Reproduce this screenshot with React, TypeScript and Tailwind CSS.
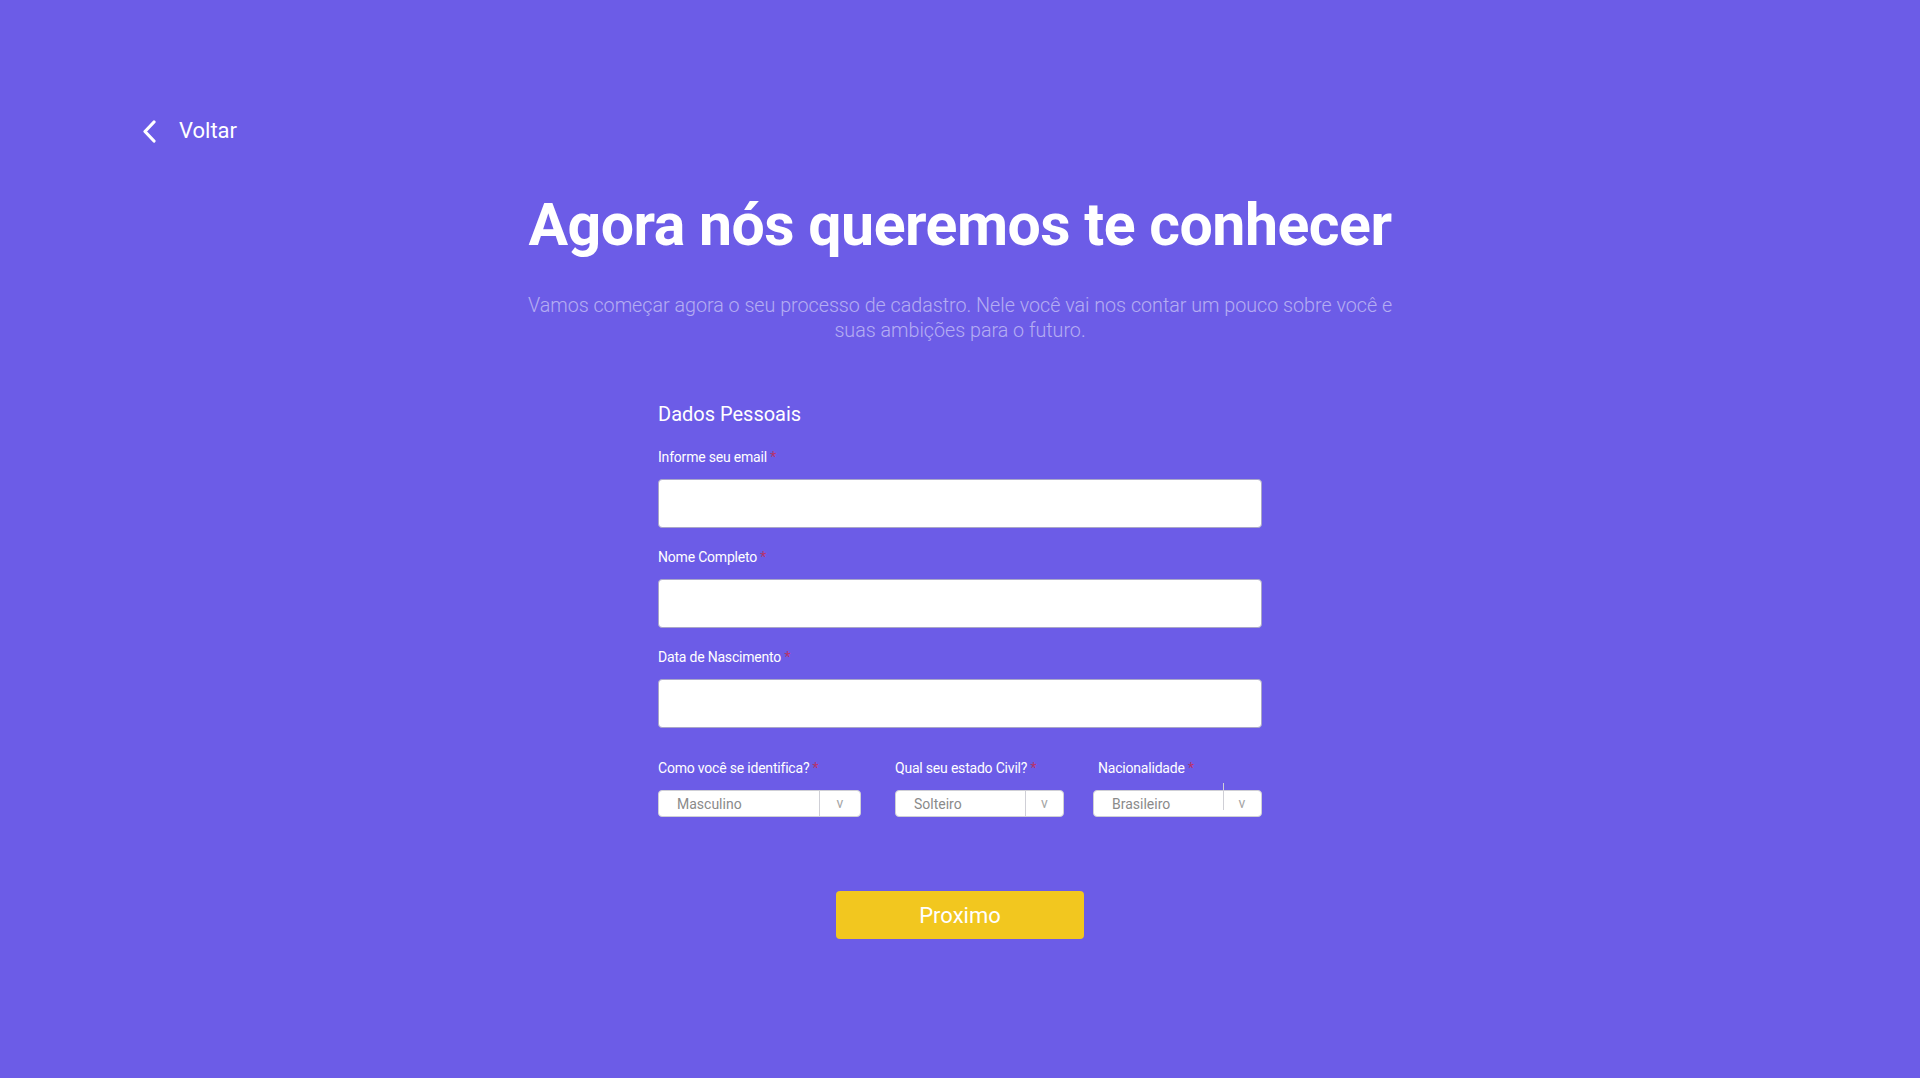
import React from "react";

const Label = ({ text, className = "" }: { text: string; className?: string }) => (
  <label className={`block text-[14px] leading-5 text-white tracking-[-0.2px] ${className}`}>
    {text} <span className="text-[#b8336a]">*</span>
  </label>
);

const Field = ({ label }: { label: string }) => (
  <div className="flex flex-col">
    <Label text={label} className="mb-3" />
    <input
      type="text"
      className="h-[49px] w-full rounded-[4px] border border-[#a9a6c8] bg-white px-3 outline-none"
    />
  </div>
);

const Select = ({
  label,
  value,
  width,
  arrowW,
  glitch = false,
  labelIndent = false,
}: {
  label: string;
  value: string;
  width: string;
  arrowW: string;
  glitch?: boolean;
  labelIndent?: boolean;
}) => (
  <div className={`flex flex-col ${width}`}>
    <Label text={label} className={`mb-3 ${labelIndent ? "pl-[5px]" : ""}`} />
    <div className="relative flex h-[27px] items-center rounded-[4px] border border-[#cfcfd6] bg-white">
      <span className="flex-1 pl-[18px] text-[14px] leading-5 text-[#8a8a8a]">{value}</span>
      <span
        className={`flex h-full ${arrowW} items-center justify-center text-[14px] text-[#a6a6a6] ${
          glitch ? "" : "border-l border-[#cfcfd6]"
        }`}
      >
        v
      </span>
      {glitch && (
        <span className="absolute right-[37px] top-[-8px] h-[27px] w-px bg-[#cfcfd6]" />
      )}
    </div>
  </div>
);

export default function App() {
  return (
    <div className="h-[1078px] w-full bg-[#6c5ce7] font-['Roboto',sans-serif] text-white">
      <div className="pt-[116px] pl-[142px]">
        <button className="flex items-center gap-[22px] text-[22px] leading-[30px] text-white">
          <svg width="15" height="23" viewBox="0 0 15 23" fill="none">
            <path d="M12 2 L3 11.5 L12 21" stroke="white" strokeWidth="3.2" strokeLinecap="round" strokeLinejoin="round" />
          </svg>
          <span>Voltar</span>
        </button>
      </div>

      <div className="mt-[49px] flex flex-col items-center">
        <h1 className="text-[59px] font-bold leading-[60px] tracking-[-0.5px] text-white">
          Agora nós queremos te conhecer
        </h1>
        <p className="mt-[38px] w-[880px] text-center text-[19.7px] font-light leading-[25px] text-white/50">
          Vamos começar agora o seu processo de cadastro. Nele você vai nos contar um pouco sobre você e
          suas ambições para o futuro.
        </p>

        <form className="mt-[57px] w-[604px]" onSubmit={(e) => e.preventDefault()}>
          <h2 className="mb-[19px] text-[20px] leading-7 text-white">Dados Pessoais</h2>
          <div className="flex flex-col gap-[19px]">
            <Field label="Informe seu email" />
            <Field label="Nome Completo" />
            <Field label="Data de Nascimento" />
          </div>

          <div className="mt-[30px] flex">
            <Select label="Como você se identifica?" value="Masculino" width="w-[203px]" arrowW="w-[41px]" />
            <Select label="Qual seu estado Civil?" value="Solteiro" width="ml-[34px] w-[169px]" arrowW="w-[38px]" />
            <Select
              label="Nacionalidade"
              value="Brasileiro"
              width="ml-[29px] w-[169px]"
              arrowW="w-[38px]"
              glitch
              labelIndent
            />
          </div>

          <div className="mt-[74px] flex justify-center">
            <button
              type="submit"
              className="h-12 w-[248px] rounded-[4px] bg-[#f2c71f] text-[22px] text-white"
            >
              Proximo
            </button>
          </div>
        </form>
      </div>
    </div>
  );
}
